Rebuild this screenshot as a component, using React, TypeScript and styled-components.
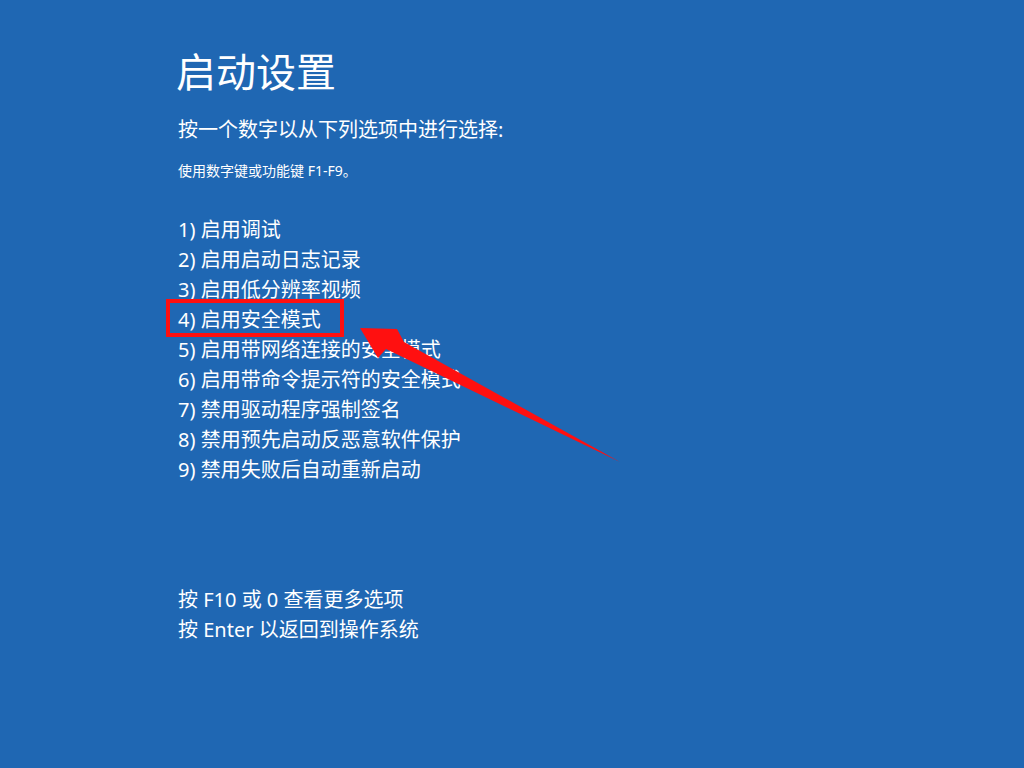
import React from 'react';
import styled, { createGlobalStyle } from 'styled-components';

const GlobalStyle = createGlobalStyle`
  html, body {
    margin: 0;
    padding: 0;
    background: #1f67b3;
  }
  body {
    font-family: "Noto Sans", "Noto Sans CJK SC", sans-serif;
    color: #ffffff;
  }
`;

const Screen = styled.div`
  position: relative;
  width: 1024px;
  height: 768px;
  box-sizing: border-box;
  padding: 48px 0 0 178px;
  background: #1f67b3;
  overflow: hidden;
`;

const Title = styled.h1`
  margin: 0 0 0 -2px;
  font-size: 40px;
  line-height: 48px;
  font-weight: 400;
`;

const Prompt = styled.p`
  margin: 19px 0 0;
  font-size: 20px;
  line-height: 30px;
`;

const Hint = styled.p`
  margin: 16px 0 0;
  font-size: 14px;
  line-height: 20px;
`;

const Options = styled.ol`
  list-style: none;
  margin: 34px 0 0;
  padding: 0;
`;

const Option = styled.li<{ $marked?: boolean }>`
  position: relative;
  font-size: 20px;
  line-height: 30px;

  ${({ $marked }) =>
    $marked &&
    `
    &::after {
      content: '';
      position: absolute;
      left: -12px;
      top: -6px;
      width: 170px;
      height: 30px;
      border: 4px solid #ff1010;
    }
  `}
`;

const Footer = styled.div`
  margin-top: 100px;
  font-size: 20px;
  line-height: 30px;
`;

const Arrow = styled.svg`
  position: absolute;
  left: 0;
  top: 0;
  pointer-events: none;
`;

const options = [
  '1) 启用调试',
  '2) 启用启动日志记录',
  '3) 启用低分辨率视频',
  '4) 启用安全模式',
  '5) 启用带网络连接的安全模式',
  '6) 启用带命令提示符的安全模式',
  '7) 禁用驱动程序强制签名',
  '8) 禁用预先启动反恶意软件保护',
  '9) 禁用失败后自动重新启动',
];

const App: React.FC = () => {
  return (
    <>
      <GlobalStyle />
      <Screen>
        <Title>启动设置</Title>
        <Prompt>按一个数字以从下列选项中进行选择:</Prompt>
        <Hint>使用数字键或功能键 F1-F9。</Hint>

        <Options>
          {options.map((text, i) => (
            <Option key={text} $marked={i === 3}>
              {text}
            </Option>
          ))}
        </Options>

        <Footer>
          <div>按 F10 或 0 查看更多选项</div>
          <div>按 Enter 以返回到操作系统</div>
        </Footer>

        <Arrow width="1024" height="768" viewBox="0 0 1024 768">
          <polygon
            points="360,328 397,329 404,342 620,462 386,349 378,358"
            fill="#ff1010"
          />
        </Arrow>
      </Screen>
    </>
  );
};

export default App;
